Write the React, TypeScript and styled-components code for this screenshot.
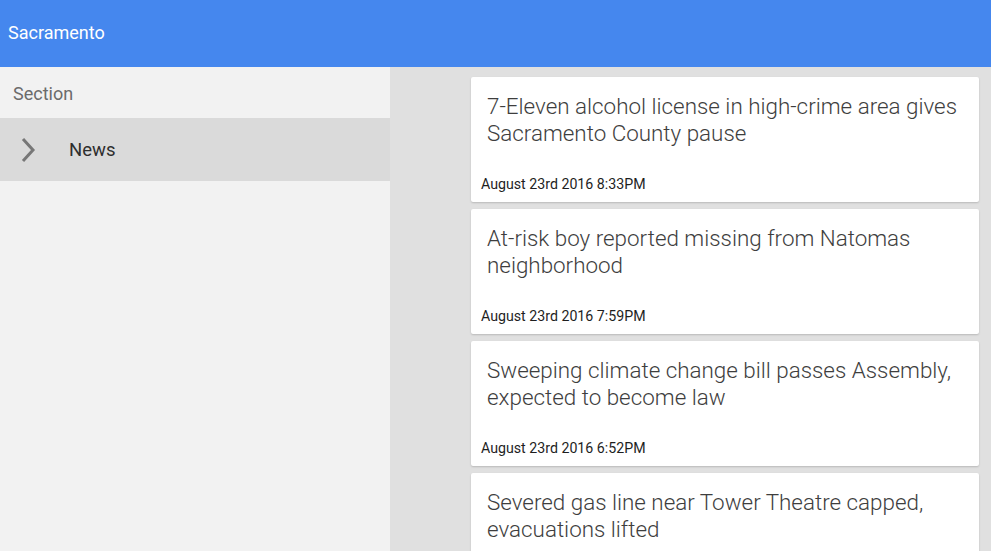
import React from 'react';
import styled, { createGlobalStyle } from 'styled-components';

const GlobalStyle = createGlobalStyle`
  html, body {
    margin: 0;
    padding: 0;
    height: 100%;
    overflow: hidden;
  }
  #root {
    height: 100%;
  }
  body {
    font-family: Roboto, "Liberation Sans", sans-serif;
  }
`;

const Page = styled.div`
  display: flex;
  flex-direction: column;
  height: 551px;
  width: 991px;
  background-color: #e0e0e0;
`;

const Header = styled.div`
  height: 67px;
  flex-shrink: 0;
  background-color: #4587ee;
  color: #ffffff;
  font-size: 18px;
  display: flex;
  align-items: center;
  padding-left: 8px;
  padding-bottom: 2px;
  box-sizing: border-box;
`;

const Body = styled.div`
  display: flex;
  flex: 1;
  min-height: 0;
`;

const Sidebar = styled.div`
  width: 390px;
  flex-shrink: 0;
  background-color: #f2f2f2;
  display: flex;
  flex-direction: column;
`;

const SectionLabel = styled.div`
  height: 51px;
  display: flex;
  align-items: center;
  padding-left: 13px;
  padding-top: 1px;
  box-sizing: border-box;
  font-size: 18px;
  color: #6b6b6b;
`;

const NavItem = styled.div<{ $active?: boolean }>`
  height: 63px;
  display: flex;
  align-items: center;
  background-color: ${p => (p.$active ? '#dadada' : 'transparent')};
  padding-left: 20px;
  box-sizing: border-box;
`;

const NavText = styled.span`
  margin-left: 33px;
  font-size: 18.5px;
  color: #2e2e2e;
`;

const Feed = styled.div`
  flex: 1;
  display: flex;
  flex-direction: column;
  gap: 7px;
  padding: 10px 12px 0 81px;
  overflow: hidden;
`;

const Card = styled.div`
  background-color: #ffffff;
  border-radius: 2px;
  box-shadow: 0 1px 2px rgba(0, 0, 0, 0.18);
  display: flex;
  flex-direction: column;
  flex-shrink: 0;
  height: 125px;
  box-sizing: border-box;
  padding: 16px 0 10px 0;
`;

const Title = styled.div`
  font-size: 22.4px;
  font-weight: 300;
  line-height: 27px;
  color: #3e3e3e;
  padding: 0 16px;
`;

const Stamp = styled.div`
  margin-top: auto;
  font-size: 14.2px;
  line-height: 16px;
  color: #1e1e1e;
  padding-left: 10px;
`;

const Chevron = () => (
  <svg width="16" height="26" viewBox="0 0 16 26">
    <path d="M3 2 L13 13 L3 24" fill="none" stroke="#777777" strokeWidth="3" />
  </svg>
);

const stories = [
  { title: '7-Eleven alcohol license in high-crime area gives Sacramento County pause', time: 'August 23rd 2016 8:33PM' },
  { title: 'At-risk boy reported missing from Natomas neighborhood', time: 'August 23rd 2016 7:59PM' },
  { title: 'Sweeping climate change bill passes Assembly, expected to become law', time: 'August 23rd 2016 6:52PM' },
  { title: 'Severed gas line near Tower Theatre capped, evacuations lifted', time: 'August 23rd 2016 6:20PM' },
];

export default function App() {
  return (
    <>
      <GlobalStyle />
      <Page>
        <Header>Sacramento</Header>
        <Body>
          <Sidebar>
            <SectionLabel>Section</SectionLabel>
            <NavItem $active>
              <Chevron />
              <NavText>News</NavText>
            </NavItem>
          </Sidebar>
          <Feed>
            {stories.map(s => (
              <Card key={s.title}>
                <Title>{s.title}</Title>
                <Stamp>{s.time}</Stamp>
              </Card>
            ))}
          </Feed>
        </Body>
      </Page>
    </>
  );
}
